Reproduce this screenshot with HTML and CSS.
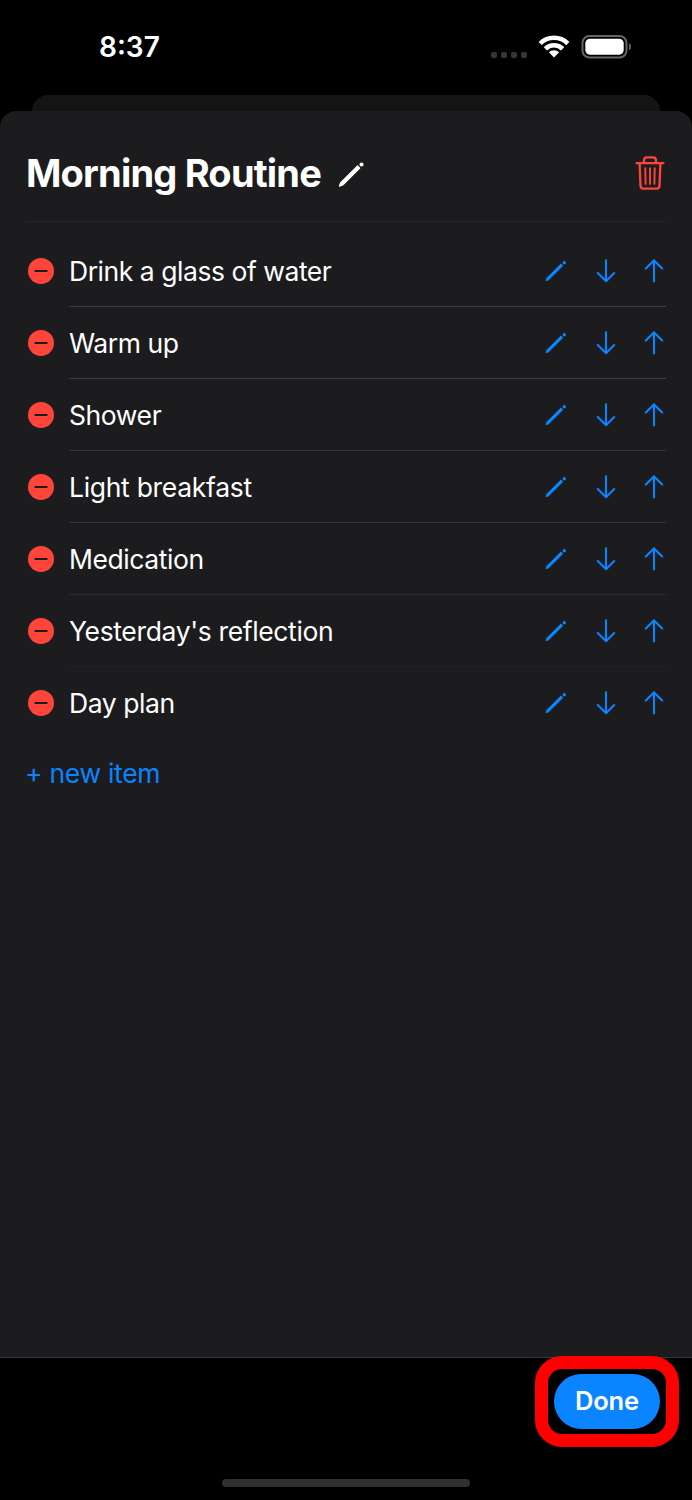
FILE: index.html
```html
<!DOCTYPE html>
<html lang="en">
<head>
<meta charset="utf-8">
<title>Morning Routine</title>
<link rel="stylesheet" href="styles.css">
</head>
<body>
<svg class="defs" aria-hidden="true">
  <symbol id="pencil" viewBox="0 0 24 24"><path d="M2 21.6l.9-2.6L17 4.9l1.8 1.8L4.7 20.7z" fill="currentColor" stroke="currentColor" stroke-width="1" stroke-linejoin="round"/><circle cx="20.3" cy="3.7" r="1.7" fill="currentColor"/></symbol>
  <symbol id="down" viewBox="0 0 20 24"><path d="M10 1.2v21M1.8 14l8.2 8.2L18.2 14" fill="none" stroke="currentColor" stroke-width="2.1" stroke-linecap="round" stroke-linejoin="round"/></symbol>
  <symbol id="up" viewBox="0 0 20 24"><path d="M10 22.4v-21M1.8 9.6L10 1.4l8.2 8.2" fill="none" stroke="currentColor" stroke-width="2.1" stroke-linecap="round" stroke-linejoin="round"/></symbol>
  <symbol id="remove" viewBox="0 0 26 26"><circle cx="13" cy="13" r="13" fill="#ff453a"/><path d="M7.3 13h11.4" stroke="#1c1c1e" stroke-width="2" stroke-linecap="round"/></symbol>
</svg>
<div class="screen">
  <header class="status">
    <span class="time">8:37</span>
    <div class="indicators">
      <div class="cell"><i></i><i></i><i></i><i></i></div>
      <svg class="wifi" viewBox="0 0 32 24"><g fill="none" stroke="#fff" stroke-width="4.6"><path d="M2.2 8.5a19.5 19.5 0 0 1 27.6 0"/><path d="M7.4 13.8a12.2 12.2 0 0 1 17.2 0"/></g><path d="M16 22.4l-5.1-5.1a7.2 7.2 0 0 1 10.2 0z" fill="#fff"/></svg>
      <svg class="battery" viewBox="0 0 50 24"><rect x="1.5" y="1" width="44" height="21.5" rx="7" fill="none" stroke="#656567" stroke-width="2"/><rect x="4.3" y="3.7" width="38.4" height="16" rx="4.7" fill="#fff"/><path d="M48 8q2 1 2 3.8t-2 3.8z" fill="#656567"/></svg>
    </div>
  </header>
  <div class="back-sheet"></div>
  <main class="sheet">
    <div class="heading">
      <h1>Morning Routine</h1>
      <svg class="edit-title"><use href="#pencil"/></svg>
      <svg class="trash" viewBox="0 0 30 34" fill="none" stroke="#ff453a" stroke-width="2.3" stroke-linecap="round" stroke-linejoin="round"><path d="M1.6 7.2h26.8M9 7V4.4Q9 1.3 12 1.3h6q3 0 3 3.1V7M4.6 7.8l.9 22.1q.1 2.7 2.8 2.7h13.4q2.7 0 2.8-2.7l.9-22.1"/><path d="M10.3 12.3l.3 15.6M15 12.3v15.6M19.7 12.3l-.3 15.6" stroke-width="1.9"/></svg>
    </div>
    <ul class="items">
      <li><svg class="remove"><use href="#remove"/></svg><div class="row strong"><span class="t1">Drink a glass of water</span><svg class="pencil"><use href="#pencil"/></svg><svg class="arrow"><use href="#down"/></svg><svg class="arrow up"><use href="#up"/></svg></div></li>
      <li><svg class="remove"><use href="#remove"/></svg><div class="row strong"><span class="t2">Warm up</span><svg class="pencil"><use href="#pencil"/></svg><svg class="arrow"><use href="#down"/></svg><svg class="arrow up"><use href="#up"/></svg></div></li>
      <li><svg class="remove"><use href="#remove"/></svg><div class="row"><span class="t3">Shower</span><svg class="pencil"><use href="#pencil"/></svg><svg class="arrow"><use href="#down"/></svg><svg class="arrow up"><use href="#up"/></svg></div></li>
      <li><svg class="remove"><use href="#remove"/></svg><div class="row"><span class="t4">Light breakfast</span><svg class="pencil"><use href="#pencil"/></svg><svg class="arrow"><use href="#down"/></svg><svg class="arrow up"><use href="#up"/></svg></div></li>
      <li><svg class="remove"><use href="#remove"/></svg><div class="row soft"><span class="t5">Medication</span><svg class="pencil"><use href="#pencil"/></svg><svg class="arrow"><use href="#down"/></svg><svg class="arrow up"><use href="#up"/></svg></div></li>
      <li><svg class="remove"><use href="#remove"/></svg><div class="row faint"><span class="t6">Yesterday's reflection</span><svg class="pencil"><use href="#pencil"/></svg><svg class="arrow"><use href="#down"/></svg><svg class="arrow up"><use href="#up"/></svg></div></li>
      <li><svg class="remove"><use href="#remove"/></svg><div class="row last"><span class="t7">Day plan</span><svg class="pencil"><use href="#pencil"/></svg><svg class="arrow"><use href="#down"/></svg><svg class="arrow up"><use href="#up"/></svg></div></li>
    </ul>
    <a class="new-item">+ new item</a>
  </main>
  <footer class="toolbar">
    <div class="highlight"><button class="done">Done</button></div>
    <div class="home"></div>
  </footer>
</div>
</body>
</html>
```
FILE: styles.css
```css
* { box-sizing: border-box; }
body { margin: 0; background: #000; color: #fff; font-family: Inter, "Liberation Sans", sans-serif; }
svg { display: block; flex: none; }
.defs { position: absolute; width: 0; height: 0; }
.screen { width: 692px; height: 1500px; display: flex; flex-direction: column; overflow: hidden; }
.status { height: 95px; display: flex; justify-content: space-between; padding: 29px 61px 0 99px; }
.time { font-size: 28px; line-height: 36px; font-weight: 600; letter-spacing: 0; }
.indicators { display: flex; height: 36px; align-items: center; }
.cell { display: flex; gap: 4px; margin: 15px 11px 0 0; }
.cell i { width: 6px; height: 6px; border-radius: 2px; background: #363638; }
.wifi { width: 32px; height: 24px; margin-right: 11px; }
.battery { width: 50px; height: 24px; }
.back-sheet { height: 16px; margin: 0 32px; background: #141415; border-radius: 16px 16px 0 0; }
.sheet { height: 1247px; background: #1c1c1e; border-bottom: 1px solid #38383a; border-radius: 16px 16px 0 0; padding: 0 26px; }
.heading { height: 111px; padding-top: 14px; display: flex; align-items: center; border-bottom: 1px solid #27272a; }
h1 { margin: 0; font-size: 38px; line-height: 48px; font-weight: 700; letter-spacing: -.8px; white-space: nowrap; }
.edit-title { width: 29px; height: 29px; margin-left: 16px; margin-top: 3px; }
.trash { width: 30px; height: 34px; margin-left: auto; margin-right: 1px; margin-bottom: 1px; }
.items { list-style: none; margin: 13px 0 0; padding: 0; }
.items li { display: flex; height: 72px; align-items: center; }
.remove { width: 26px; height: 26px; margin: 0 15px 1px 2px; }
.row { flex: 1; height: 72px; display: flex; align-items: center; border-bottom: 1px solid #353537; color: #0a84ff; }
.row.strong { border-color: #3c3c3e; }
.row.soft { border-color: #2a2a2c; }
.row.faint { border-color: #222224; }
.row.last { border-color: transparent; }
.row span { flex: 1; color: #fff; font-size: 26.5px; line-height: 36px; letter-spacing: -.42px; white-space: nowrap; }
.row .t1 { letter-spacing: -.46px; }
.row .t4 { letter-spacing: -.3px; }
.row .t6 { letter-spacing: -.36px; }
.pencil { width: 24px; height: 24px; margin-right: 28px; }
.arrow { width: 20px; height: 24px; }
.arrow.up { margin: 0 2px 0 28px; }
.new-item { display: block; margin-top: 16px; margin-left: -1px; font-size: 26.5px; line-height: 36px; letter-spacing: -.3px; color: #0a84ff; }
.toolbar { flex: 1; display: flex; flex-direction: column; }
.highlight { width: 144px; height: 91px; margin: -2px 13px 0 auto; border: 13px solid #f00; border-radius: 27px; display: flex; align-items: center; justify-content: center; background: #000; z-index: 1; }
.done { width: 106px; height: 55px; border: 0; border-radius: 28px; padding: 0 0 1px; background: #0a84ff; color: #fff; font: 600 25.5px/36px Inter, sans-serif; letter-spacing: -.2px; }
.home { width: 248px; height: 8px; border-radius: 4px; background: #303030; margin: 32px auto 0; }
```
